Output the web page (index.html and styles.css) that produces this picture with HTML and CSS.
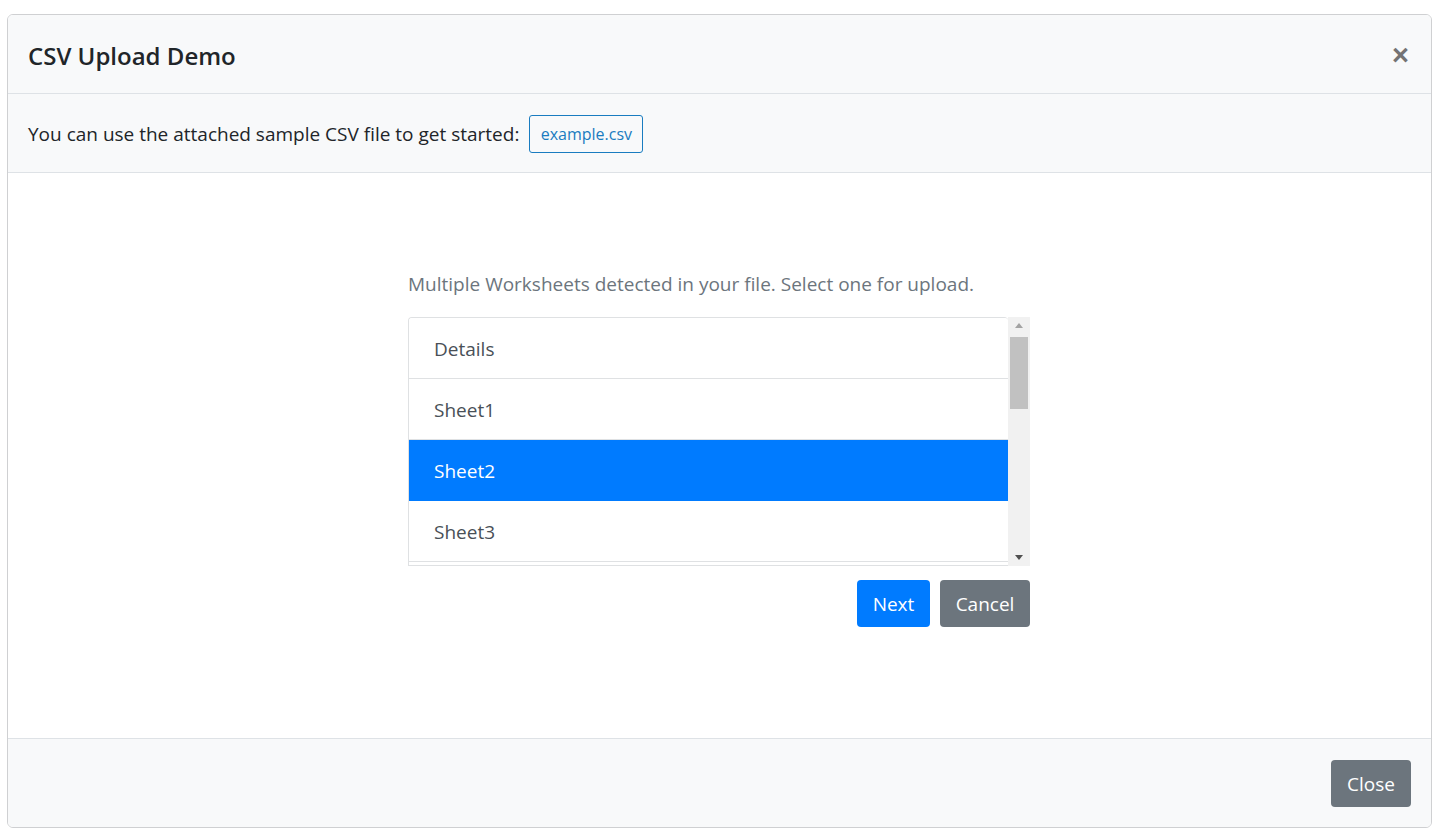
FILE: index.html
```html
<!DOCTYPE html>
<html>
<head>
<meta charset="utf-8">
<link rel="stylesheet" href="styles.css">
</head>
<body>
<div class="modal">
  <div class="modal-header">
    <h5 class="modal-title">CSV Upload Demo</h5>
    <button class="close-x" aria-label="Close">&times;</button>
  </div>
  <div class="sample-bar">
    <span>You can use the attached sample CSV file to get started:</span>
    <a class="btn-outline" href="#">example.csv</a>
  </div>
  <div class="modal-body">
    <div class="picker">
      <p class="muted">Multiple Worksheets detected in your file. Select one for upload.</p>
      <div class="list-wrap">
        <div class="list">
          <div class="item">Details</div>
          <div class="item">Sheet1</div>
          <div class="item active">Sheet2</div>
          <div class="item">Sheet3</div>
          <div class="item"></div>
        </div>
        <div class="scrollbar">
          <div class="arrow up"></div>
          <div class="track"><div class="thumb"></div></div>
          <div class="arrow down"></div>
        </div>
      </div>
      <div class="actions">
        <button class="btn btn-primary next">Next</button>
        <button class="btn btn-secondary cancel">Cancel</button>
      </div>
    </div>
  </div>
  <div class="modal-footer">
    <button class="btn btn-secondary close">Close</button>
  </div>
</div>
</body>
</html>
```
FILE: styles.css
```css
* { box-sizing: border-box; }
html, body { margin: 0; background: #fff; }
body {
  padding: 14px 12px 8px 7px;
  font-family: "Open Sans", "Noto Sans", sans-serif;
  color: #212529;
  font-size: 19px;
}
.modal {
  width: 1425px;
  height: 814px;
  border: 1px solid #cfd0d2;
  border-radius: 6px;
  display: flex;
  flex-direction: column;
  overflow: hidden;
}
.modal-header {
  height: 79px;
  background: #f8f9fa;
  border-bottom: 1px solid #dee2e6;
  display: flex;
  align-items: center;
  justify-content: space-between;
  padding: 2px 22px 0 20px;
}
.modal-title {
  margin: 0;
  font-size: 24px;
  font-weight: 600;
  color: #212529;
}
.close-x {
  border: 0;
  background: none;
  font-family: "Liberation Sans", sans-serif;
  font-size: 29px;
  font-weight: 700;
  color: #737373;
  padding: 0;
  line-height: 1;
}
.sample-bar {
  height: 79px;
  background: #f8f9fa;
  border-bottom: 1px solid #dee2e6;
  display: flex;
  align-items: center;
  gap: 10px;
  padding: 1px 20px 0;
  font-size: 19px;
}
.btn-outline {
  display: inline-flex;
  align-items: center;
  justify-content: center;
  height: 38px;
  width: 114px;
  border: 1px solid #1a7cc0;
  border-radius: 3px;
  color: #1a7cc0;
  text-decoration: none;
  font-size: 16px;
}
.modal-body {
  flex: 1;
  background: #fff;
  display: flex;
  justify-content: center;
  padding-top: 98px;
  padding-right: 1px;
}
.picker {
  width: 622px;
  display: flex;
  flex-direction: column;
}
.muted {
  margin: 0 0 19px;
  color: #6c757d;
  line-height: 27px;
  font-size: 19px;
}
.list-wrap {
  display: flex;
  height: 249px;
}
.list {
  flex: 1;
  overflow: hidden;
  border: 1px solid #dfe1e3;
  border-right: 0;
  border-radius: 4px 4px 0 0;
}
.item {
  height: 61px;
  display: flex;
  align-items: center;
  padding: 1px 25px 0;
  color: #495057;
  border-bottom: 1px solid #dfe1e3;
  font-size: 19px;
  background: #fff;
}
.item.active {
  background: #007bff;
  color: #fff;
  border-bottom-color: #007bff;
  margin: 0 -1px;
  padding-left: 26px;
}
.scrollbar {
  width: 22px;
  background: #f1f1f1;
  display: flex;
  flex-direction: column;
  align-items: center;
}
.arrow {
  height: 17px;
  width: 100%;
  display: flex;
  align-items: center;
  justify-content: center;
}
.arrow.up::before {
  content: "";
  border-left: 4px solid transparent;
  border-right: 4px solid transparent;
  border-bottom: 5px solid #a3a3a3;
}
.arrow.down::before {
  content: "";
  border-left: 4px solid transparent;
  border-right: 4px solid transparent;
  border-top: 5px solid #505050;
}
.track {
  flex: 1;
  width: 100%;
  padding: 3px 2px 0;
}
.thumb {
  height: 72px;
  background: #c1c1c1;
}
.actions {
  display: flex;
  justify-content: flex-end;
  gap: 10px;
  margin-top: 14px;
}
.btn {
  height: 47px;
  border: 0;
  border-radius: 4px;
  font-family: "Open Sans", "Noto Sans", sans-serif;
  font-size: 19px;
  padding: 0;
  color: #fff;
}
.btn.next { width: 73px; }
.btn.cancel { width: 90px; }
.btn.close { width: 80px; }
.btn-primary { background: #007bff; }
.btn-secondary { background: #6c757d; }
.modal-footer {
  height: 89px;
  background: #f8f9fa;
  border-top: 1px solid #dee2e6;
  display: flex;
  align-items: center;
  justify-content: flex-end;
  padding: 0 20px 0 0;
}
.modal-footer .btn { margin-top: 1px; }
```
